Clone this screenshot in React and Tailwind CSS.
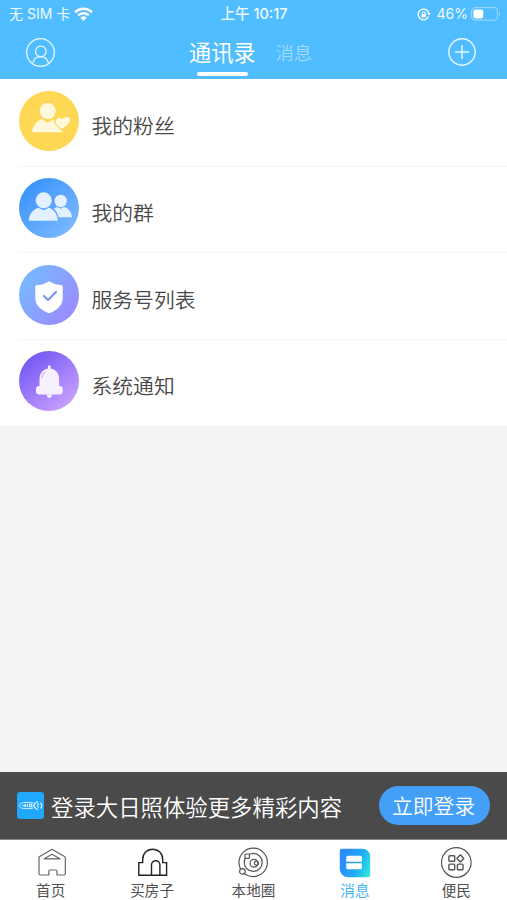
import React from 'react'

const FONT = "font-['Noto_Sans_CJK_SC',sans-serif]"

function StatusBar() {
  return (
    <div className="grid h-7 grid-cols-3 items-center text-[14px] leading-none text-white/90">
      <div className="flex items-center pl-[9px]">
        <span className="font-['Inter','Noto_Sans_CJK_SC',sans-serif] whitespace-nowrap">无 SIM 卡</span>
        <svg className="ml-1 h-[14px] w-[19px]" viewBox="0 0 19 14" fill="none" stroke="white" strokeWidth="2.6">
          <path d="M1 5.2a12.2 12.2 0 0 1 17 0M4.2 8.4a7.6 7.6 0 0 1 10.6 0" />
          <path d="M9.5 14 6.4 10.8a4.5 4.5 0 0 1 6.2 0z" fill="white" stroke="none" />
        </svg>
      </div>
      <div className="pl-px text-center font-['Inter','Noto_Sans_CJK_SC',sans-serif] text-[14.5px] font-medium whitespace-nowrap">上午 10:17</div>
      <div className="flex items-center justify-end pr-[6px]">
        <svg className="h-[13px] w-[14px]" viewBox="0 0 14 13" fill="none" stroke="white" strokeWidth="1.3">
          <path d="M11.6 8.6A5.4 5.4 0 1 1 11.8 5" />
          <path d="m10.2 5.2 1.8 2.2 1.8-2.4z" fill="white" stroke="none" />
          <rect x="4.4" y="6" width="4.6" height="3.6" rx=".6" fill="white" stroke="none" />
          <path d="M5.3 6V5a1.4 1.4 0 0 1 2.8 0v1" strokeWidth="1" />
        </svg>
        <span className="ml-[6px] font-['Inter',sans-serif]">46%</span>
        <svg className="ml-[3px] h-[14px] w-[30px]" viewBox="0 0 30 14" fill="none">
          <rect x=".6" y=".6" width="26" height="12.6" rx="3.4" stroke="white" strokeOpacity=".45" />
          <rect x="2.4" y="2.4" width="9.8" height="9" rx="1.8" fill="white" />
          <path d="M28 5v4c1.3-.6 1.3-3.4 0-4z" fill="white" fillOpacity=".5" />
        </svg>
      </div>
    </div>
  )
}

function Header() {
  return (
    <header className="h-[79px] shrink-0 bg-[#4fbdff]">
      <StatusBar />
      <div className="flex h-[51px] items-start pr-[31px] pl-[26px] text-white">
        <svg className="mt-[10px] size-[29px]" viewBox="0 0 29 29" fill="none" stroke="#e9f8ff" strokeWidth="1.3">
          <circle cx="14.5" cy="14.5" r="13.8" />
          <circle cx="14.8" cy="13.4" r="5.3" />
          <path d="M6.6 25.6c1-4.2 4.2-6.9 8-6.9s7 2.7 8 6.9" />
        </svg>
        <div className="ml-[134px] flex flex-col items-center">
          <span className="mt-[8px] h-[32px] text-[22.2px] leading-[31px] whitespace-nowrap">通讯录</span>
          <span className="mt-[4px] h-[4px] w-[51px] rounded-full bg-white" />
        </div>
        <span className="mt-[9px] ml-5 text-[18.3px] leading-[31px] font-[350] whitespace-nowrap text-[#a0dbff]">消息</span>
        <svg className="mt-[10px] ml-auto size-[28px]" viewBox="0 0 28 28" fill="none" stroke="#e9f8ff" strokeWidth="1.4">
          <circle cx="14" cy="14" r="13.2" />
          <path d="M14 7v14M7 14h14" />
        </svg>
      </div>
    </header>
  )
}

function FansIcon() {
  return (
    <svg className="size-[60px]" viewBox="0 0 60 60">
      <circle cx="30" cy="30" r="30" fill="#fed755" />
      <g fill="#fff8dc">
        <circle cx="28.7" cy="20" r="8" />
        <path d="M13 41.3c.8-6.6 4.6-11.2 9.7-13l6 3.4 5.8-3.4c.4 4 3.8 7.6 9.8 13z" />
        <path d="M43.2 38.3c-4-2.2-6.900-4.600-7.100-7.600-.1-4.200 4.600-5.400 7.200-3.200 2.700-2.300 7.300-2.600 8.200.4.9 3.400-4 7.700-8.300 10.400z" stroke="#fed755" strokeWidth="1" />
      </g>
    </svg>
  )
}

function GroupIcon() {
  return (
    <svg className="size-[60px]" viewBox="0 0 60 60">
      <defs>
        <linearGradient id="group" x1="0" y1="0" x2="1" y2="1">
          <stop offset=".15" stopColor="#3c96fb" />
          <stop offset=".9" stopColor="#7db8ff" />
        </linearGradient>
      </defs>
      <circle cx="30" cy="30" r="30" fill="url(#group)" />
      <g fill="#e3f0ff">
        <circle cx="41.7" cy="23" r="6.2" />
        <path d="M35 30.6c1.1-.6 2-1.2 3-1.5l3.7 1.6 3.5-1.6c4.5 1.4 7.4 5.1 7.8 10.2H39.6c-.8-3.5-2.1-6.2-4.6-8.7z" />
        <circle cx="24.7" cy="22.3" r="8" />
        <path d="M9.7 42.7c.4-6.4 4-11.2 9.6-13l5.4 2.6 5.3-2.6c5.2 1.8 8.5 6.8 8.7 13z" />
      </g>
    </svg>
  )
}

function ServiceIcon() {
  return (
    <svg className="size-[60px]" viewBox="0 0 60 60">
      <defs>
        <linearGradient id="service" x1="0" y1=".1" x2="1" y2=".9">
          <stop offset=".1" stopColor="#76b9ff" />
          <stop offset=".9" stopColor="#9b8bff" />
        </linearGradient>
      </defs>
      <circle cx="30" cy="30" r="30" fill="url(#service)" />
      <path
        d="M30.2 16.2c.5 0 1 .3 1.5.7 3 2 6.5 2.9 10.2 3.1 1.1.1 1.8.7 1.8 1.9v11.6c0 7-6.2 12.2-13.5 14.7-7.5-2.5-13.9-7.7-13.9-14.7V21.9c0-1.2.7-1.8 1.8-1.9 4-.2 7.6-1.1 10.6-3.1.5-.4 1-.7 1.5-.7z"
        fill="#fff"
      />
      <path d="m25 31 4 4 8-8" fill="none" stroke="#8299f5" strokeWidth="2.3" strokeLinecap="round" strokeLinejoin="round" />
    </svg>
  )
}

function NoticeIcon() {
  return (
    <svg className="size-[60px]" viewBox="0 0 60 60">
      <defs>
        <linearGradient id="notice" x1=".1" y1="0" x2=".9" y2="1">
          <stop offset=".15" stopColor="#7a5df5" />
          <stop offset=".95" stopColor="#cba4ff" />
        </linearGradient>
      </defs>
      <circle cx="30" cy="30" r="30" fill="url(#notice)" />
      <g fill="#f7f0ff">
        <rect x="28.9" y="14.6" width="2.8" height="5" rx="1.2" />
        <path d="M20.5 36v-8c0-6 4.2-10.4 9.8-10.4S40.1 22 40.1 28v8z" />
        <rect x="17" y="35" width="26.7" height="8.6" rx="3" />
        <path d="M27.6 43.4H33c-.2 2-1.1 3.4-2.7 3.4s-2.5-1.4-2.7-3.4z" />
      </g>
      <path d="M22.900 26.500c.3-2.700 1.500-4.400 3.600-5.500" fill="none" stroke="#b79cf8" strokeWidth=".9" strokeLinecap="round" />
    </svg>
  )
}

const contacts = [
  { label: '我的粉丝', Icon: FansIcon },
  { label: '我的群', Icon: GroupIcon },
  { label: '服务号列表', Icon: ServiceIcon },
  { label: '系统通知', Icon: NoticeIcon },
]

function ContactList() {
  return (
    <ul className="bg-white pt-px pl-[19px]">
      {contacts.map(({ label, Icon }) => (
        <li key={label} className="flex h-[86.7px] items-start border-b border-[#f5f5f5] pt-[11.4px] last:h-[85.5px] last:border-b-0">
          <Icon />
          <span className="mt-[19px] ml-[12.5px] text-[20.8px] leading-[30px] font-[350] text-[#484848]">{label}</span>
        </li>
      ))}
    </ul>
  )
}

function LoginBanner() {
  return (
    <div className="flex h-[68px] items-center border-b border-[#888] bg-[#4a4a4a] px-[17px] text-white">
      <svg className="size-[27px] shrink-0" viewBox="0 0 27 27" fill="none" stroke="#d8f1ff">
        <rect width="27" height="27" rx="3" fill="#20a8fc" stroke="none" />
        <path d="M16.5 11.2C12 10.2 7 10 4.300 11.200c-2.400 1.100-2.400 3.700 0 4.800 2.700 1.100 7.700.9 12.200-.1" strokeWidth="1" />
        <path d="M5 13.500h1.600M8 12.200l-1 2.800M8 12.200l1.200 2.800M10.500 12v3M12.500 12.200h2v2.600h-2zM15.500 13.600h2" strokeWidth="1.1" />
        <path d="M21 9.600c-2.600 1-4.200 2.300-4.200 4s1.600 3 4.200 4" strokeWidth="1.2" />
        <path d="M21.800 11.600c-1.600.7-1.600 3.200 0 3.900M23.500 10.700c1.500 1.700 1.500 4.100 0 5.800" strokeWidth="1.2" />
      </svg>
      <span className="ml-[7px] text-[22.4px] leading-[32px] font-[350] whitespace-nowrap">登录大日照体验更多精彩内容</span>
      <button type="button" className="ml-auto h-[39px] w-[111px] shrink-0 rounded-full bg-[#449ff8] pr-[2px] text-[20.8px] leading-[39px] font-[350] whitespace-nowrap">
        立即登录
      </button>
    </div>
  )
}

function HomeIcon() {
  return (
    <svg className="size-8" viewBox="0 0 32 32" fill="none" stroke="#666" strokeWidth="1.2" strokeLinejoin="round">
      <path d="M4.700 10.400 17.100 3.200l12.400 7.200q.8.500.8 1.400v15.700q0 1.500-1.500 1.500h-6.800v-3.600q0-1.400-1.400-1.400h-5.400q-1.400 0-1.400 1.400V29H5.500Q4 29 4 27.500V11.800q0-.9.700-1.400z" />
      <path d="M9.300 12.800 17 8.200l8 4.600z" />
    </svg>
  )
}

function HouseIcon() {
  return (
    <svg className="size-8" viewBox="0 0 32 32" fill="none" stroke="#222" strokeWidth="1.4">
      <path d="M2.800 29.300V16.600h3.900v-3.400c0-5.800 4.400-10 10-10s10 4.200 10 10v3.400h3.900v12.700z" />
      <path d="M15.500 29V19a4.200 4.200 0 0 1 8.400 0v10" />
    </svg>
  )
}

function CircleIcon() {
  return (
    <svg className="size-8" viewBox="0 0 32 32" fill="none" stroke="#555" strokeWidth="1.2">
      <circle cx="16.2" cy="16.4" r="14.2" />
      <circle cx="16.2" cy="16.4" r="9" />
      <rect x="8" y="8" width="4.4" height="4.4" rx="1" fill="white" />
      <circle cx="5.4" cy="25.4" r="2.8" fill="white" />
      <circle cx="17" cy="17.2" r="3.9" />
      <circle cx="19.4" cy="17.2" r="2" />
    </svg>
  )
}

function MessageIcon() {
  return (
    <svg className="size-8" viewBox="0 0 32 32">
      <defs>
        <linearGradient id="message" x1="0" y1=".3" x2="1" y2=".7">
          <stop offset=".1" stopColor="#2c8cfb" />
          <stop offset=".6" stopColor="#20aaf5" />
          <stop offset="1" stopColor="#2fe3dd" />
        </linearGradient>
      </defs>
      <path d="M2.8 2.7h20.400a8 8 0 0 1 8 8v18.200a2.300 2.300 0 0 1-2.300 2.300H8.800a8 8 0 0 1-8-8V4.700a2 2 0 0 1 2-2z" fill="url(#message)" />
      <path d="M8.800 9.800h12.600q1.500 0 1.500 1.500v4.500H7.300v-4.500q0-1.500 1.500-1.500zM7.300 17.300h15.600v4.400q0 1.500-1.500 1.500H8.800q-1.500 0-1.500-1.500z" fill="#fff" />
    </svg>
  )
}

function ServicesIcon() {
  return (
    <svg className="size-8" viewBox="0 0 32 32" fill="none" stroke="#555" strokeWidth="1.4">
      <circle cx="16.3" cy="16.5" r="14.8" strokeWidth="1.2" />
      <rect x="8.9" y="9.7" width="5.8" height="5.6" rx=".8" />
      <rect x="8.9" y="18.1" width="5.8" height="5.6" rx=".8" />
      <rect x="17.4" y="18.1" width="5.6" height="5.6" rx=".8" />
      <path d="m20.4 8.8 3.4 3.7-3.4 3.6-3.5-3.6z" strokeLinejoin="round" />
    </svg>
  )
}

const tabs = [
  { label: '首页', Icon: HomeIcon },
  { label: '买房子', Icon: HouseIcon },
  { label: '本地圈', Icon: CircleIcon },
  { label: '消息', Icon: MessageIcon, active: true },
  { label: '便民', Icon: ServicesIcon },
]

function TabBar() {
  return (
    <nav className="grid h-[60px] grid-cols-5 bg-white">
      {tabs.map(({ label, Icon, active }) => (
        <div key={label} className="flex flex-col items-center pt-[6px]">
          <Icon />
          <span className={`mt-[2px] text-[14.6px] leading-[20px] ${active ? 'text-[#45b5f8]' : 'text-[#505050]'}`}>{label}</span>
        </div>
      ))}
    </nav>
  )
}

export default function App() {
  return (
    <div className={`flex h-[900px] w-[507px] flex-col overflow-hidden bg-[#f4f4f4] ${FONT}`}>
      <Header />
      <ContactList />
      <div className="mt-auto">
        <LoginBanner />
        <TabBar />
      </div>
    </div>
  )
}
